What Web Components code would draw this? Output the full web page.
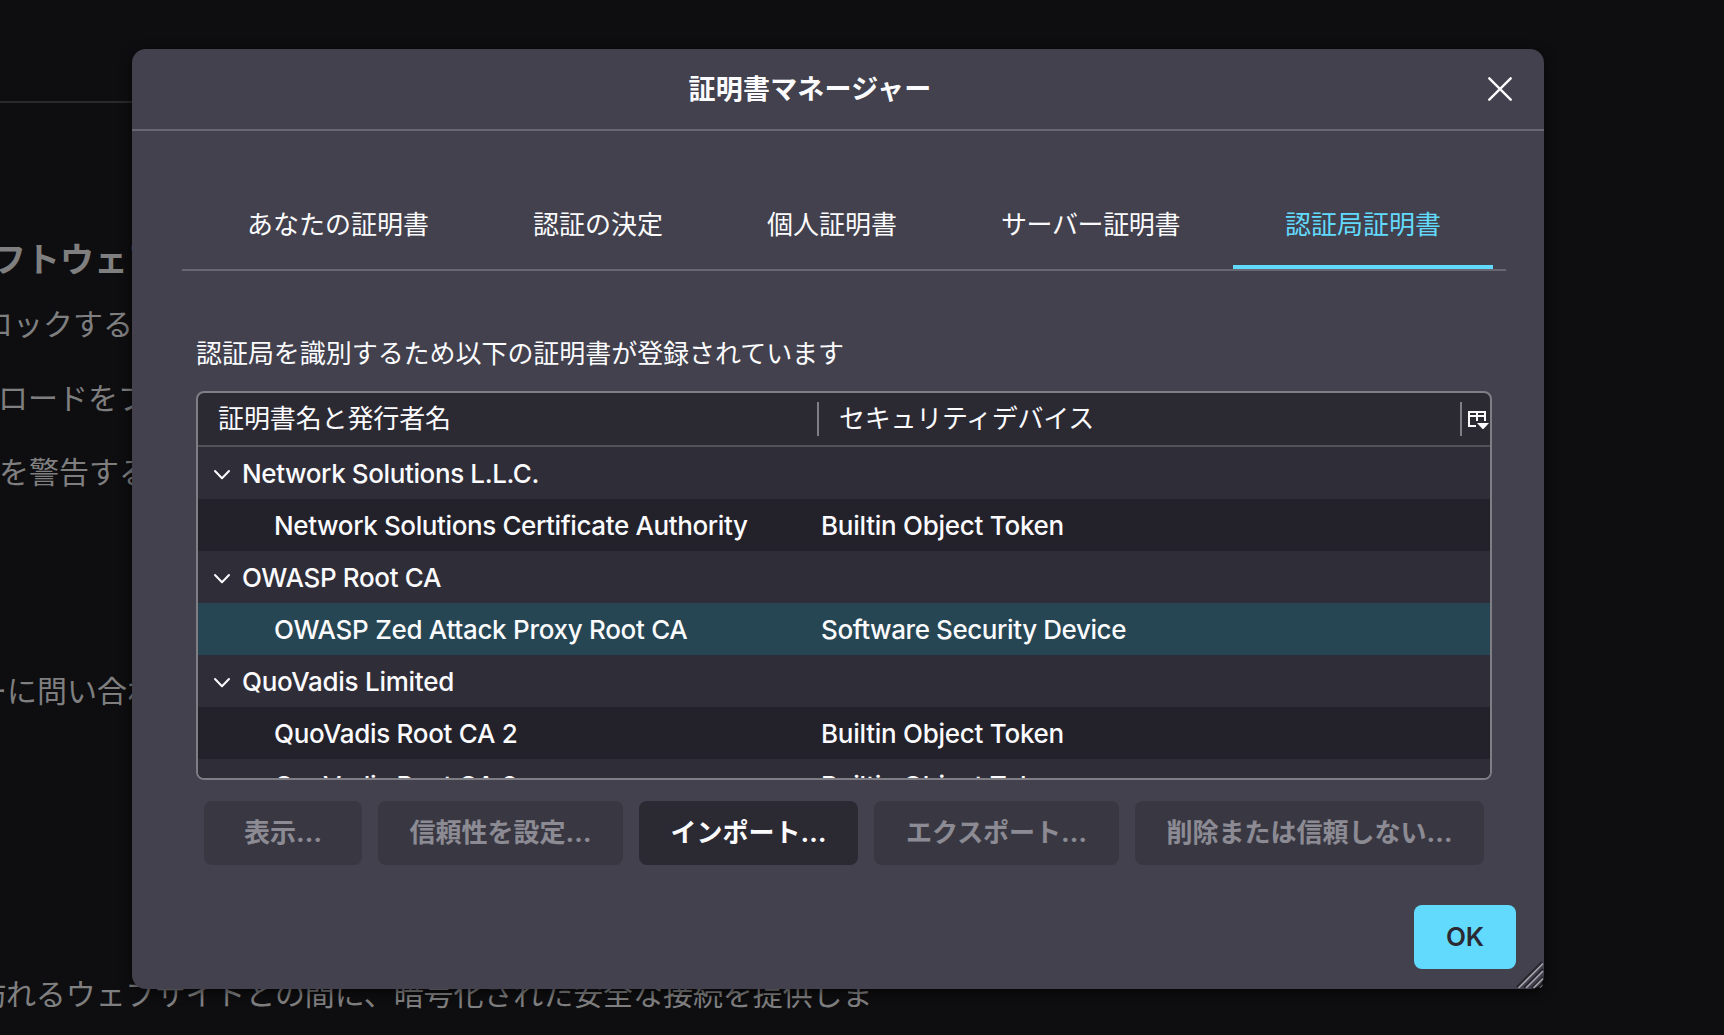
<!DOCTYPE html>
<html lang="ja">
<head>
<meta charset="utf-8">
<title>証明書マネージャー</title>
<style>
html, body { margin: 0; height: 100%; overflow: hidden; background: #0e0e10; }
body { font-family: Inter, "Noto Sans CJK JP", sans-serif; font-size: 26px; color: #fbfbfe; }
</style>
</head>
<body>
<settings-page>
  <settings-line style="--top:132px; --x:-8px; --size:34px; --weight:700">フトウェアからの</settings-line>
  <settings-line style="--top:14px; --x:-17px">ロックする</settings-line>
  <settings-line style="--top:24px; --x:-2px">ロードをブロック</settings-line>
  <settings-line style="--top:24px; --x:-1px">を警告する</settings-line>
  <settings-line style="--top:169px; --x:-23px">ーに問い合わせて</settings-line>
  <settings-line style="--top:253px; --x:-24px; --track:-0.08px">訪れるウェブサイトとの間に、暗号化された安全な接続を提供しま</settings-line>
</settings-page>

<cert-dialog>
  <fit-text slot="title" w="243">証明書マネージャー</fit-text>
  <cert-tabs slot="tabs">
    <cert-tab w="182">あなたの証明書</cert-tab>
    <cert-tab w="130">認証の決定</cert-tab>
    <cert-tab w="130">個人証明書</cert-tab>
    <cert-tab w="179">サーバー証明書</cert-tab>
    <cert-tab w="156" selected>認証局証明書</cert-tab>
  </cert-tabs>
  <fit-text slot="description" w="648">認証局を識別するため以下の証明書が登録されています</fit-text>
  <cert-tree>
    <fit-text slot="name" w="233">証明書名と発行者名</fit-text>
    <fit-text slot="device" w="255">セキュリティデバイス</fit-text>
    <tree-row group><fit-text slot="name" w="297">Network Solutions L.L.C.</fit-text></tree-row>
    <tree-row><fit-text slot="name" w="473.5">Network Solutions Certificate Authority</fit-text><fit-text slot="device" w="243">Builtin Object Token</fit-text></tree-row>
    <tree-row group><fit-text slot="name" w="199">OWASP Root CA</fit-text></tree-row>
    <tree-row selected><fit-text slot="name" w="413.5">OWASP Zed Attack Proxy Root CA</fit-text><fit-text slot="device" w="305">Software Security Device</fit-text></tree-row>
    <tree-row group><fit-text slot="name" w="212">QuoVadis Limited</fit-text></tree-row>
    <tree-row><fit-text slot="name" w="243.5">QuoVadis Root CA 2</fit-text><fit-text slot="device" w="243">Builtin Object Token</fit-text></tree-row>
    <tree-row><fit-text slot="name" w="243.5">QuoVadis Root CA 3</fit-text><fit-text slot="device" w="243">Builtin Object Token</fit-text></tree-row>
  </cert-tree>
  <push-button slot="actions" disabled style="width:158px"><fit-text w="78">表示…</fit-text></push-button>
  <push-button slot="actions" disabled style="width:245px"><fit-text w="182">信頼性を設定…</fit-text></push-button>
  <push-button slot="actions" style="width:219px"><fit-text w="156">インポート…</fit-text></push-button>
  <push-button slot="actions" disabled style="width:245px"><fit-text w="181">エクスポート…</fit-text></push-button>
  <push-button slot="actions" disabled style="width:349px"><fit-text w="286">削除または信頼しない…</fit-text></push-button>
  <push-button slot="accept" primary style="width:102px"><fit-text w="38">OK</fit-text></push-button>
</cert-dialog>

<script>
function define(name, html, setup) {
  const template = document.createElement('template');
  template.innerHTML = html;
  customElements.define(name, class extends HTMLElement {
    connectedCallback() {
      if (this.shadowRoot) return;
      this.attachShadow({ mode: 'open' }).append(template.content.cloneNode(true));
      if (setup) setup(this);
    }
  });
}

// Spreads the tracking so that the label takes the width in its "w" attribute.
// Tracking switches ligatures off, so the first pass is corrected by the next ones.
function fit(host) {
  const span = host.shadowRoot.querySelector('.label');
  const count = [...host.textContent].length;
  let spacing = 0;
  for (let pass = 0; pass < 3; pass++) {
    spacing += (+host.getAttribute('w') - span.getBoundingClientRect().width) / count;
    span.style.letterSpacing = spacing.toFixed(3) + 'px';
  }
}

define('fit-text', `
<style>:host { display: block; white-space: nowrap; height: 40px; line-height: 40px; } .label { display: block; width: max-content; height: 40px; }</style>
<span class="label"><slot></slot></span>`);

define('settings-page', `
<style>
:host { display: flex; flex-direction: column; height: 1035px; width: 1724px; overflow: hidden; color: #7f7f80; }
.rule { height: 2px; margin-top: 101px; flex: none; background: #29292c; width: 1544px; }
</style>
<div class="rule"></div><slot></slot>`);

define('settings-line', `
<style>
:host { display: block; flex: none; height: 50px; line-height: 50px; white-space: nowrap; letter-spacing: var(--track, 0);
  margin-top: var(--top); margin-left: var(--x); font-size: var(--size, 30px); font-weight: var(--weight, 400); }
</style>
<slot></slot>`);

define('cert-dialog', `
<style>
:host { position: absolute; left: 132px; top: 49px; width: 1412px; height: 940px; display: flex; flex-direction: column;
  background: #42414d; border-radius: 14px; box-shadow: 0 3px 12px rgba(0,0,0,.6); }
header { height: 80px; display: flex; align-items: center; border-bottom: 2px solid #676671; flex: none; }
.title { flex: 1; display: flex; justify-content: center; padding-top: 2px; font-size: 27px; font-weight: 700; }
.close { width: 24px; height: 24px; margin-right: 32px; display: block; }
.tabs { margin: 48px 38px 0 50px; flex: none; }
.desc { height: 40px; margin: 63px 0 17px 64px; flex: none; }
.tree { margin: 0 52px 0 64px; height: 389px; flex: none; display: flex; }
.actions { display: flex; gap: 16px; margin: 21px 0 0 72px; flex: none; }
footer { display: flex; justify-content: flex-end; margin: 40px 28px 0 0; flex: none; }
.grip { position: absolute; right: 0; bottom: 0; width: 28px; height: 28px; border-bottom-right-radius: 8px; }
</style>
<header>
  <div class="title"><slot name="title"></slot></div>
  <svg class="close" viewBox="0 0 24 24"><path d="M1.3 1.3 22.7 22.7M22.7 1.3 1.3 22.7" stroke="#fbfbfe" stroke-width="2.4" stroke-linecap="round"/></svg>
</header>
<div class="tabs"><slot name="tabs"></slot></div>
<div class="desc"><slot name="description"></slot></div>
<div class="tree"><slot></slot></div>
<div class="actions"><slot name="actions"></slot></div>
<footer><slot name="accept"></slot></footer>
<svg class="grip" viewBox="0 0 28 28">
  <g fill="none" stroke-width="2.1">
    <path stroke="#25242c" d="M1 26 26 1M8 27 27 8M16 27 27 16M23 27 27 23"/>
    <path stroke="#a3a2a9" stroke-width="1.7" d="M2.5 27 27 2.5M10 27 27 10M17.5 27 27 17.5M24.5 27 27 24.5"/>
  </g>
</svg>`);

define('cert-tabs', `
<style>
:host { display: flex; height: 90px; padding: 0 13px 0 14px; border-bottom: 2px solid #676671; }
</style>
<slot></slot>`);

define('cert-tab', `
<style>
:host { display: block; flex: none; height: 86px; line-height: 91px; padding: 0 53px 0 51px; white-space: nowrap; border-bottom: 4px solid transparent; }
:host([selected]) { padding: 0 52px; color: #62dafd; border-bottom-color: #62dafd; }
.label { display: block; width: max-content; height: 86px; }
</style>
<span class="label"><slot></slot></span>`, fit);

define('cert-tree', `
<style>
:host { display: flex; flex-direction: column; flex: 1; box-sizing: border-box; border: 2px solid #7f7e85; border-radius: 8px; background: #2b2a33; overflow: hidden; }
.head { display: flex; align-items: center; height: 52px; flex: none; border-bottom: 2px solid #535257; }
.name { width: 599px; padding-left: 20px; }
.device { flex: 1; padding-left: 20px; }
.sep { width: 2px; height: 34px; background: #7f7e85; }
.picker { width: 22px; height: 20px; display: block; margin: 0 0 0 6px; }
</style>
<div class="head">
  <div class="name"><slot name="name"></slot></div><div class="sep"></div>
  <div class="device"><slot name="device"></slot></div><div class="sep"></div>
  <svg class="picker" viewBox="0 0 22 20" fill="#fbfbfe"><path d="M0 2h18v10h-2V8h-6v4H8V8H2v8h6v2H0zM2 4v2h6V4zM10 4v2h6V4z" fill-rule="evenodd"/><path d="M9 14h12l-6 6.5z"/></svg>
</div>
<slot></slot>`);

define('tree-row', `
<style>
:host { display: flex; align-items: center; height: 52px; flex: none; background: #23222b; font-weight: 450; }
:host([group]), :host(:last-child) { background: #2f2e38; }
:host([selected]) { background: #264653; }
.name { display: flex; align-items: center; width: 547px; padding-left: 76px; }
:host([group]) .name { padding-left: 15px; }
svg { display: none; width: 18px; height: 12px; margin: 3px 11px 0 0; }
:host([group]) svg { display: block; }
::slotted(fit-text) { padding-top: 1px; height: 39px; }
</style>
<div class="name"><svg viewBox="0 0 18 12"><path d="M2 2 9 9.3 16 2" fill="none" stroke="#fbfbfe" stroke-width="2" stroke-linecap="round" stroke-linejoin="round"/></svg><slot name="name"></slot></div>
<slot name="device"></slot>`);

define('push-button', `
<style>
:host { display: flex; align-items: center; justify-content: center; height: 64px; flex: none; border-radius: 8px; background: #2b2a33; font-weight: 700; }
:host([disabled]) { opacity: .4; }
:host([primary]) { background: #62dafd; color: #2b2a33; font-weight: 600; }
</style>
<slot></slot>`);

// Labels are measured once every ancestor has given them its weight and size.
document.querySelectorAll('fit-text').forEach(fit);
</script>
</body>
</html>
